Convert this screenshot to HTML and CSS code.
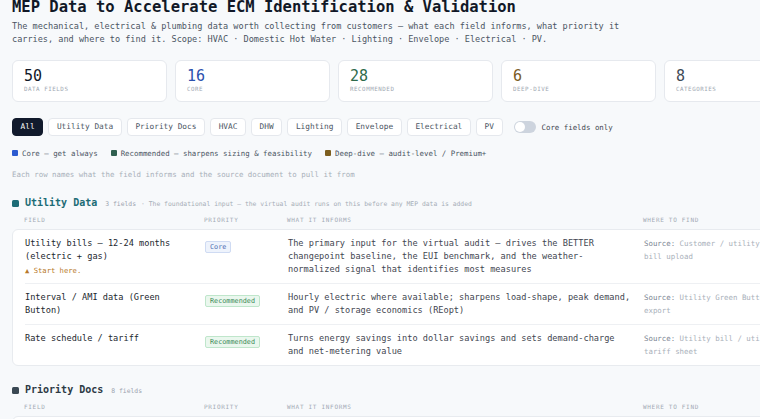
FILE: index.html
```html
<!DOCTYPE html>
<html lang="en">
<head>
<meta charset="utf-8">
<title>MEP Data to Accelerate ECM Identification &amp; Validation</title>
<link rel="stylesheet" href="styles.css">
</head>
<body>
<main class="page">
  <h1 class="title">MEP Data to Accelerate ECM Identification &amp; Validation</h1>
  <p class="lede">The mechanical, electrical &amp; plumbing data worth collecting from customers — what each field informs, what priority it carries, and where to find it. Scope: HVAC · Domestic Hot Water · Lighting · Envelope · Electrical · PV.</p>

  <section class="stats">
    <div class="stat"><div class="stat-num">50</div><div class="stat-label">Data fields</div></div>
    <div class="stat"><div class="stat-num num-core">16</div><div class="stat-label">Core</div></div>
    <div class="stat"><div class="stat-num num-rec">28</div><div class="stat-label">Recommended</div></div>
    <div class="stat"><div class="stat-num num-deep">6</div><div class="stat-label">Deep-dive</div></div>
    <div class="stat"><div class="stat-num num-cat">8</div><div class="stat-label">Categories</div></div>
  </section>

  <div class="filters">
    <button class="chip chip-active">All</button>
    <button class="chip">Utility Data</button>
    <button class="chip">Priority Docs</button>
    <button class="chip">HVAC</button>
    <button class="chip">DHW</button>
    <button class="chip">Lighting</button>
    <button class="chip">Envelope</button>
    <button class="chip">Electrical</button>
    <button class="chip">PV</button>
    <label class="toggle"><span class="switch"><span class="knob"></span></span>Core fields only</label>
  </div>

  <div class="legend">
    <span class="legend-item"><span class="sq sq-core"></span>Core — get always</span>
    <span class="legend-item"><span class="sq sq-rec"></span>Recommended — sharpens sizing &amp; feasibility</span>
    <span class="legend-item"><span class="sq sq-deep"></span>Deep-dive — audit-level / Premium+</span>
  </div>

  <p class="note">Each row names what the field informs and the source document to pull it from</p>

  <section class="section">
    <div class="sec-head">
      <span class="sec-mark mark-util"></span>
      <h2 class="sec-title title-util">Utility Data</h2>
      <span class="sec-count">3 fields</span>
      <span class="sec-desc">· The foundational input — the virtual audit runs on this before any MEP data is added</span>
    </div>
    <div class="cols">
      <span>Field</span><span>Priority</span><span>What it informs</span><span>Where to find</span>
    </div>
    <div class="card">
      <div class="row">
        <div class="f-name">Utility bills — 12-24 months (electric + gas)<div class="start">▲ Start here.</div></div>
        <div class="f-pri"><span class="badge badge-core">Core</span></div>
        <div class="f-inf">The primary input for the virtual audit — drives the BETTER changepoint baseline, the EUI benchmark, and the weather-normalized signal that identifies most measures</div>
        <div class="f-src"><span class="src-k">Source:</span> Customer / utility bill upload</div>
      </div>
      <div class="row">
        <div class="f-name">Interval / AMI data (Green Button)</div>
        <div class="f-pri"><span class="badge badge-rec">Recommended</span></div>
        <div class="f-inf">Hourly electric where available; sharpens load-shape, peak demand, and PV / storage economics (REopt)</div>
        <div class="f-src"><span class="src-k">Source:</span> Utility Green Button export</div>
      </div>
      <div class="row">
        <div class="f-name">Rate schedule / tariff</div>
        <div class="f-pri"><span class="badge badge-rec">Recommended</span></div>
        <div class="f-inf">Turns energy savings into dollar savings and sets demand-charge and net-metering value</div>
        <div class="f-src"><span class="src-k">Source:</span> Utility bill / utility tariff sheet</div>
      </div>
    </div>
  </section>

  <section class="section">
    <div class="sec-head">
      <span class="sec-mark mark-docs"></span>
      <h2 class="sec-title title-docs">Priority Docs</h2>
      <span class="sec-count">8 fields</span>
    </div>
    <div class="cols">
      <span>Field</span><span>Priority</span><span>What it informs</span><span>Where to find</span>
    </div>
    <div class="card">
      <div class="row">
        <div class="f-name">Mechanical equipment schedule</div>
        <div class="f-pri"><span class="badge badge-core">Core</span></div>
        <div class="f-inf">Confirms system types, capacities and ages for every HVAC measure</div>
        <div class="f-src"><span class="src-k">Source:</span> Mechanical drawings (M-sheets)</div>
      </div>
      <div class="row">
        <div class="f-name">As-built drawings</div>
        <div class="f-pri"><span class="badge badge-rec">Recommended</span></div>
        <div class="f-inf">Areas, zoning and envelope assemblies for model geometry</div>
        <div class="f-src"><span class="src-k">Source:</span> Facilities / architect</div>
      </div>
    </div>
  </section>
</main>
</body>
</html>
```

FILE: styles.css
```css
html, body {
  margin: 0;
}

body {
  background: #f7f9fb;
  font-family: "DejaVu Sans Mono", "Liberation Mono", monospace;
  color: #1f2937;
  overflow: hidden;
}

.page {
  width: 808px;
  padding: 0 12px;
}

.title {
  margin: 0;
  font-size: 15.5px;
  line-height: 14px;
  font-weight: 700;
  color: #111827;
}

.lede {
  margin: 5.5px 0 0;
  max-width: 630px;
  font-size: 8.55px;
  line-height: 13px;
  color: #4b5563;
}

/* stats */
.stats {
  display: grid;
  grid-template-columns: repeat(5, 155px);
  gap: 8px;
  margin-top: 14.5px;
}

.stat {
  background: #fff;
  border: 1px solid #e6e9ee;
  border-radius: 6px;
  padding: 6px 11px 7px;
}

.stat-num {
  font-size: 15px;
  line-height: 18px;
  color: #111827;
}

.num-core { color: #2b50ad; }
.num-rec { color: #2e6a4a; }
.num-deep { color: #7a5b1f; }
.num-cat { color: #3f4a57; }

.stat-label {
  font-size: 5.8px;
  line-height: 9px;
  letter-spacing: 0.55px;
  text-transform: uppercase;
  color: #a0a7b2;
}

/* filters */
.filters {
  display: flex;
  align-items: center;
  gap: 5px;
  margin-top: 16px;
}

.chip {
  font-family: inherit;
  font-size: 7.8px;
  line-height: 16px;
  padding: 0 7.6px;
  border: 1px solid #e5e8ed;
  border-radius: 4px;
  background: #fff;
  color: #4b5563;
  margin: 0;
}

.chip-active {
  background: #111a2c;
  border-color: #111a2c;
  color: #fff;
}

.toggle {
  display: flex;
  align-items: center;
  gap: 6px;
  margin-left: 6px;
  font-size: 7.4px;
  color: #3f4651;
}

.switch {
  display: flex;
  align-items: center;
  width: 22px;
  height: 12px;
  padding: 0 1px;
  box-sizing: border-box;
  border-radius: 6px;
  background: #cdd4de;
}

.knob {
  width: 10px;
  height: 10px;
  border-radius: 50%;
  background: #fff;
}

/* legend */
.legend {
  display: flex;
  gap: 13px;
  margin-top: 11.5px;
  font-size: 7.4px;
  line-height: 11px;
  color: #4b5563;
}

.legend-item {
  display: flex;
  align-items: center;
  gap: 4px;
}

.sq {
  width: 6px;
  height: 6px;
  border-radius: 1px;
}

.sq-core { background: #2c5bd0; }
.sq-rec { background: #2f5f4f; }
.sq-deep { background: #7d5e1f; }

.note {
  margin: 10px 0 0;
  font-size: 7.4px;
  line-height: 11px;
  color: #a8b0ba;
}

/* sections */
.section {
  margin-top: 16.5px;
}

.section + .section {
  margin-top: 17px;
}

.sec-head {
  display: flex;
  align-items: baseline;
  line-height: 14px;
}

.sec-mark {
  align-self: center;
  width: 7px;
  height: 7px;
  border-radius: 1.5px;
  margin-right: 6px;
}

.mark-util { background: #1d6c76; }
.mark-docs { background: #3a4853; }

.sec-title {
  margin: 0;
  font-size: 10px;
  font-weight: 700;
}

.title-util { color: #1d6c76; }
.title-docs { color: #2d3a45; }

.sec-count {
  margin-left: 8px;
  font-size: 6.4px;
  color: #9ca3af;
}

.sec-desc {
  margin-left: 5px;
  font-size: 6.4px;
  color: #a6adb7;
}

.cols,
.row {
  display: grid;
  grid-template-columns: 180px 83px 356px 135px;
}

.cols {
  margin-top: 4px;
  padding: 0 12px;
  font-size: 6px;
  line-height: 10px;
  letter-spacing: 0.7px;
  text-transform: uppercase;
  color: #a3aab5;
}

.card {
  margin-top: 4px;
  background: #fff;
  border: 1px solid #e8ebef;
  border-radius: 6px;
}

.row {
  margin: 0 12px;
  padding: 7px 0;
  font-size: 8.62px;
  line-height: 13px;
}

.row + .row {
  border-top: 1px solid #eef0f3;
}

.f-name {
  padding-right: 16px;
  color: #22272e;
}

.start {
  margin-top: 2px;
  font-size: 7.2px;
  line-height: 11px;
  color: #b7792a;
}

.f-inf {
  padding-right: 11px;
  color: #3f4651;
}

.f-src {
  font-size: 7.4px;
  color: #a9b0ba;
}

.src-k {
  color: #7b8491;
}

.badge {
  display: inline-block;
  margin-top: 4px;
  padding: 0 4px;
  font-size: 6.8px;
  line-height: 10px;
  border: 1px solid;
  border-radius: 2px;
}

.badge-core {
  background: #eef3fc;
  border-color: #cfdbf3;
  color: #4a69b0;
}

.badge-rec {
  background: #eaf7ee;
  border-color: #bfe6cb;
  color: #3b8a57;
}
```
